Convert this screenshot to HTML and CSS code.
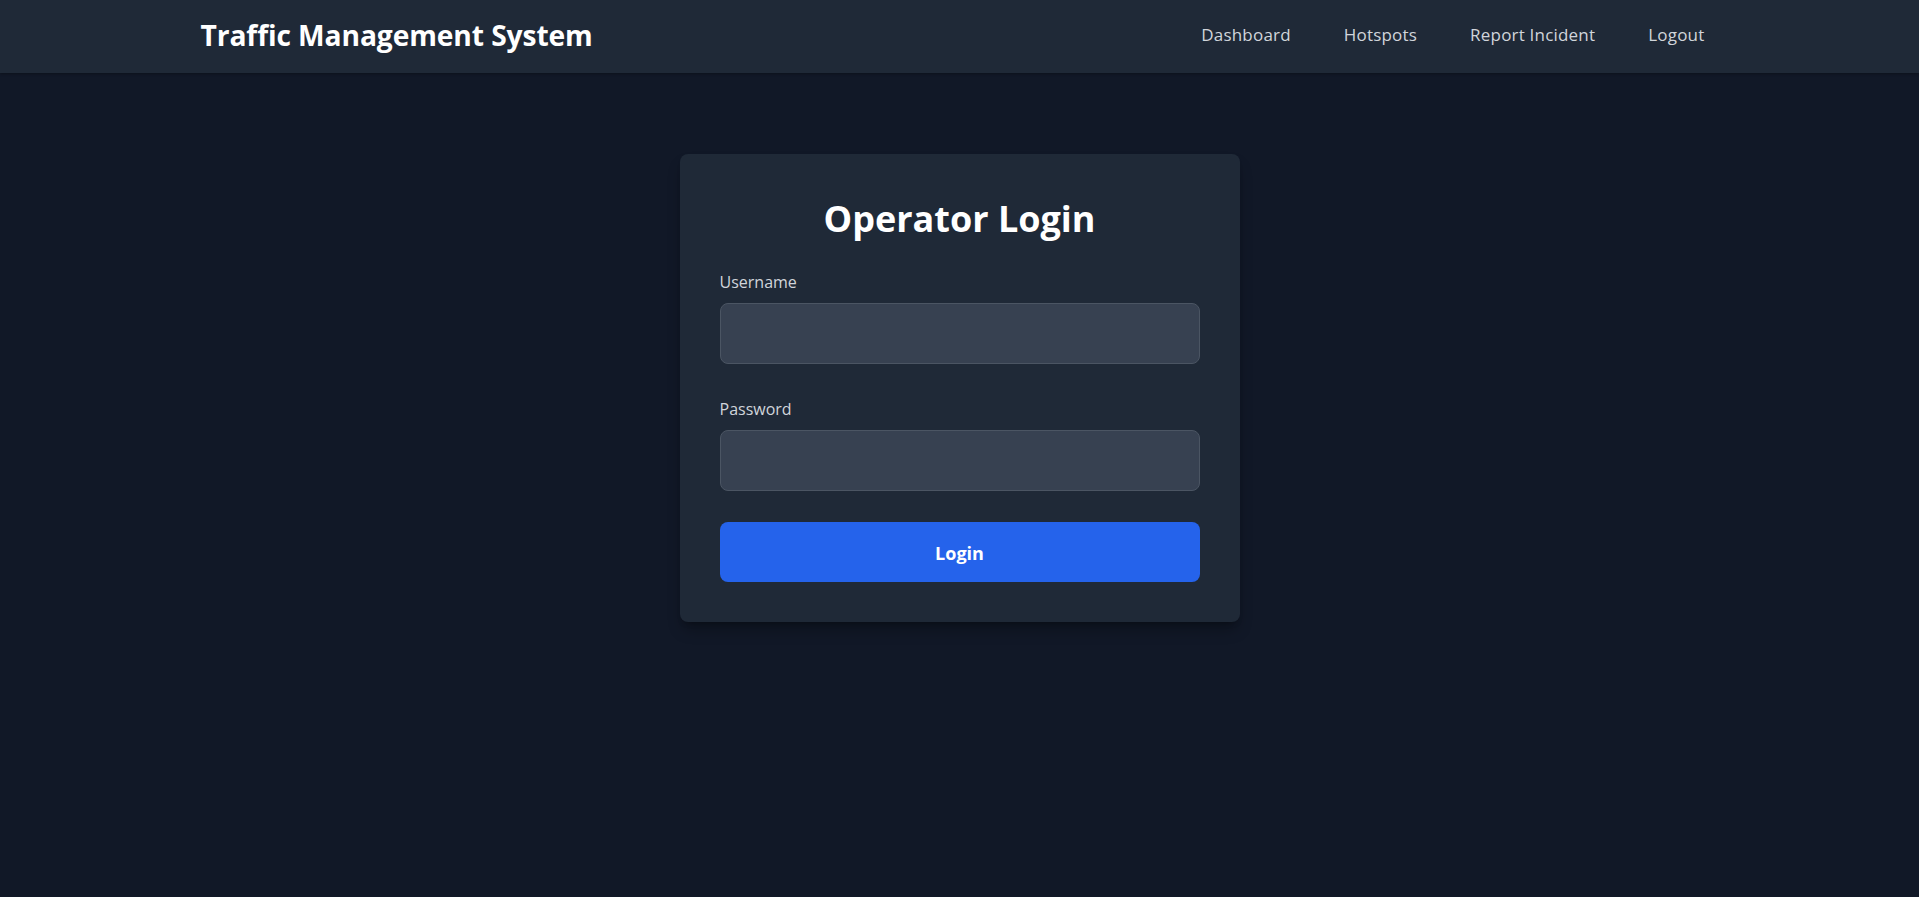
FILE: index.html
```html
<!DOCTYPE html>
<html lang="en">
<head>
<meta charset="utf-8">
<title>Traffic Management System</title>
<link rel="stylesheet" href="styles.css">
</head>
<body>
<header class="topbar">
  <div class="topbar-inner">
    <div class="brand">Traffic Management System</div>
    <nav class="nav">
      <a href="#" class="nav-link">Dashboard</a>
      <a href="#" class="nav-link">Hotspots</a>
      <a href="#" class="nav-link">Report Incident</a>
      <a href="#" class="nav-link">Logout</a>
    </nav>
  </div>
</header>
<main class="main">
  <form class="card">
    <h1 class="card-title">Operator Login</h1>
    <div class="field">
      <label class="label" for="username">Username</label>
      <input class="input" id="username" type="text">
    </div>
    <div class="field">
      <label class="label" for="password">Password</label>
      <input class="input" id="password" type="password">
    </div>
    <button class="btn" type="button">Login</button>
  </form>
</main>
</body>
</html>
```
FILE: styles.css
```css
* { box-sizing: border-box; }
html, body { margin: 0; padding: 0; }
body {
  background: #111827;
  color: #f3f4f6;
  font-family: "Open Sans", "Noto Sans", "Liberation Sans", sans-serif;
  min-height: 100vh;
}
.topbar {
  background: #1f2937;
  height: 73px;
  box-shadow: 0 1px 3px rgba(0,0,0,0.3);
}
.topbar-inner {
  max-width: 1536px;
  margin: 0 auto;
  height: 100%;
  padding: 0 23px 4px 9px;
  display: flex;
  align-items: center;
  justify-content: space-between;
}
.brand {
  font-size: 28.2px;
  font-weight: 700;
  color: #ffffff;
  letter-spacing: -0.1px;
}
.nav {
  display: flex;
  gap: 53px;
  align-items: center;
}
.nav-link {
  color: #d1d5db;
  text-decoration: none;
  font-size: 17px;
  letter-spacing: 0.2px;
}
.main {
  display: flex;
  justify-content: center;
  padding-top: 81px;
}
.card {
  width: 560px;
  background: #1f2937;
  border-radius: 8px;
  padding: 45px 40px 40px;
  box-shadow: 0 10px 15px -3px rgba(0,0,0,0.3), 0 4px 6px -4px rgba(0,0,0,0.3);
}
.card-title {
  margin: 0 0 31px;
  font-size: 36px;
  line-height: 40px;
  font-weight: 700;
  text-align: center;
  color: #ffffff;
}
.field { margin-bottom: 33px; }
.field + .field { margin-bottom: 31px; }
.label {
  display: block;
  font-size: 16px;
  line-height: 24px;
  color: #d1d5db;
  margin-bottom: 9px;
}
.input {
  display: block;
  width: 100%;
  height: 61px;
  background: #374151;
  border: 1px solid #4b5563;
  border-radius: 8px;
  color: #fff;
  font-size: 16px;
  padding: 0 16px;
  outline: none;
}
.btn {
  display: block;
  width: 100%;
  height: 60px;
  padding-top: 2px;
  background: #2563eb;
  color: #fff;
  border: none;
  border-radius: 8px;
  font-family: inherit;
  font-size: 18px;
  font-weight: 700;
  cursor: pointer;
}
```
